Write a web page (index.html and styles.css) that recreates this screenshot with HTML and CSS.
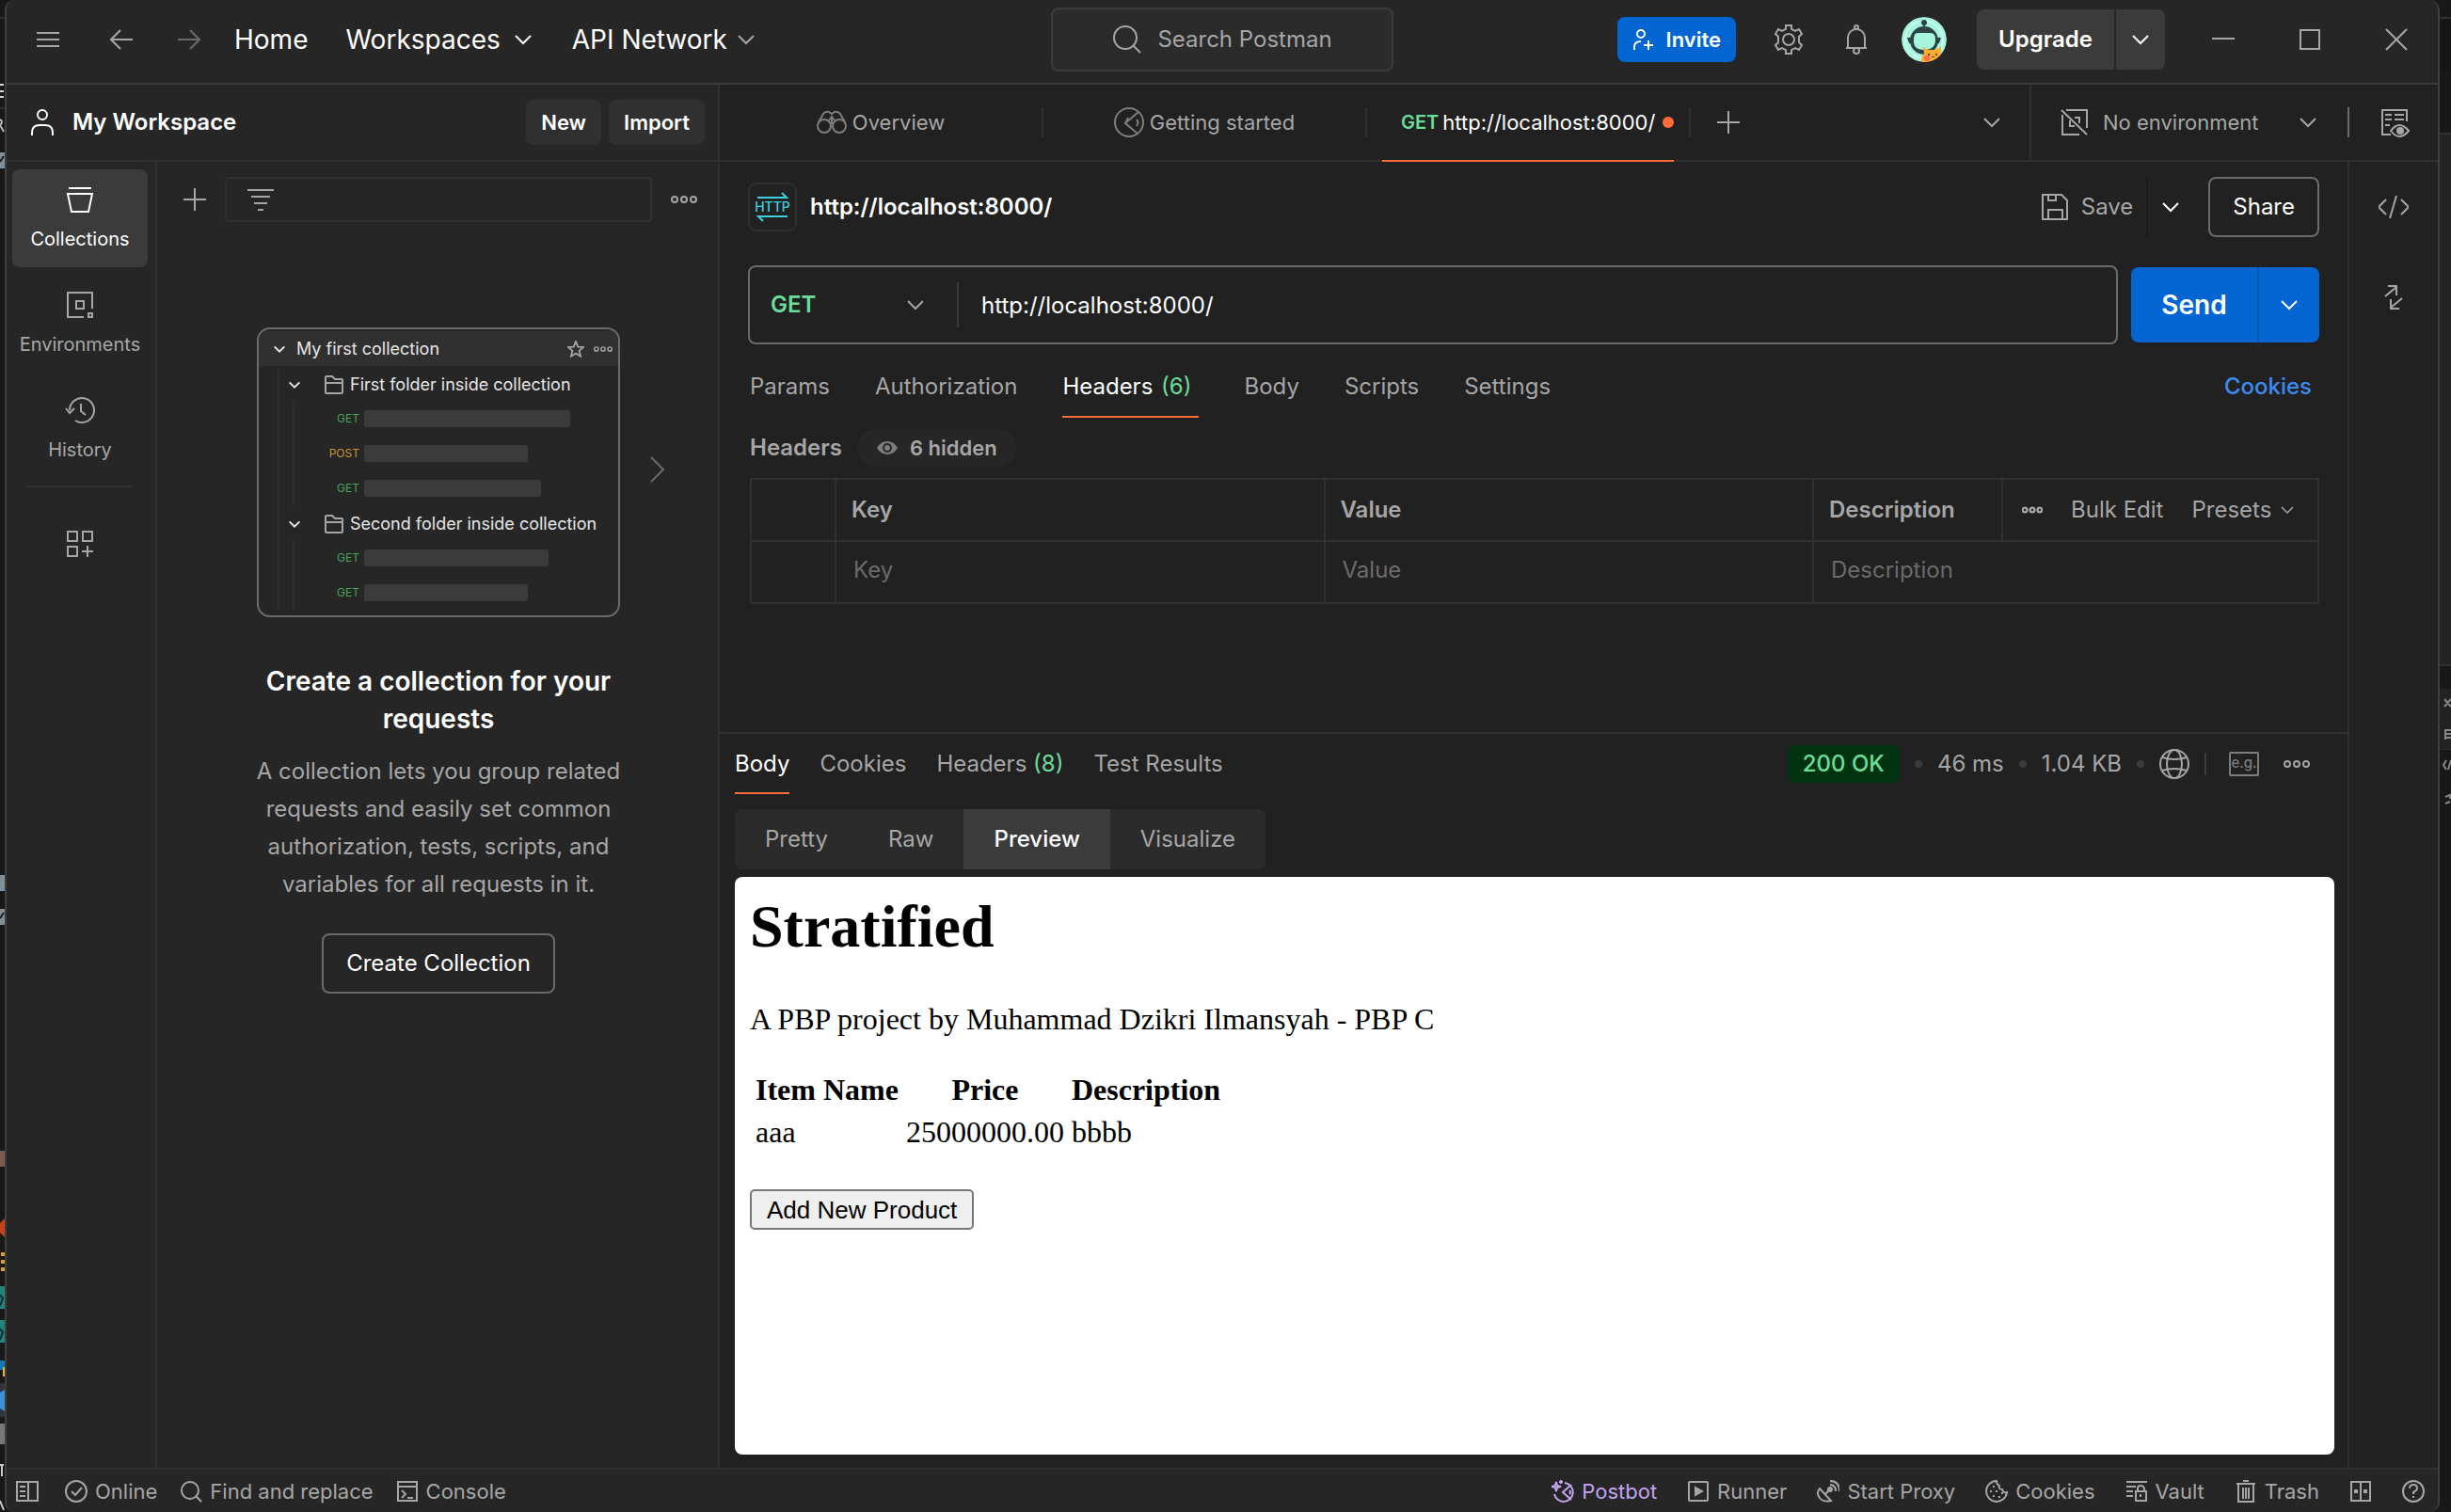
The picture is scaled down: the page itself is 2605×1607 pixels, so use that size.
FILE: index.html
```html
<!DOCTYPE html>
<html lang="en">
<head>
<meta charset="utf-8">
<title>My Workspace</title>
<link rel="stylesheet" href="styles.css">
</head>
<body>
<svg class="sprite" aria-hidden="true">
  <symbol id="chev" viewBox="0 0 24 24"><path d="M4 8l8 8 8-8"/></symbol>
  <symbol id="plus" viewBox="0 0 24 24"><path d="M12 0v24M0 12h24"/></symbol>
  <symbol id="dots" viewBox="0 0 28 28"><circle cx="4" cy="14" r="3"/><circle cx="14" cy="14" r="3"/><circle cx="24" cy="14" r="3"/></symbol>
  <symbol id="search" viewBox="0 0 32 32"><circle cx="14" cy="14" r="12"/><path d="M22 22l8 8"/></symbol>
  <symbol id="folder" viewBox="0 0 22 22"><path d="M2 19V3q0-1 1-1h6l3 3h7q1 0 1 1v13q0 1-1 1H3q-1 0-1-1zM2 9h18" /></symbol>
</svg>
<div class="desktop">
  <svg class="edge edge-left" width="5" height="1607" aria-hidden="true">
    <path d="M0 19h5M0 115h5" stroke="#2b2b2b"/>
    <path d="M0 90h4M0 97h4M0 103h4" stroke="#d8d8d8" stroke-width="2"/>
    <path d="M0 127q4 2 0 6l4 7" stroke="#b5b5b5" fill="none" stroke-width="2"/>
    <path d="M0 162h5v17H0zM0 930h5v17H0zM0 966h5v17H0z" fill="#7f909b"/>
    <path d="M0 172l4-6M0 976l4-6" stroke="#1b1b1b" stroke-width="2"/>
    <path d="M0 1223h5v17H0z" fill="#7a5a52"/><path d="M0 1300l5-5v20l-5-5z" fill="#c5431c"/>
    <path d="M1 1333h4M1 1341h4M1 1349h4" stroke="#d9a520" stroke-width="4"/>
    <path d="M0 1367h5v24H0zM0 1403h5v24H0z" fill="#1f877c"/><path d="M0 1376l3 4-3 8M0 1412l3 4-3 8" stroke="#123" fill="none"/>
    <path d="M0 1446h5v10H0z" fill="#1377b8"/><path d="M3 1453h2v10H3z" fill="#e0b63a"/>
    <path d="M0 1470h5v36H0z" fill="#33333d"/><path d="M0 1480l5-3v23l-5-3z" fill="#3e8fd8"/>
    <path d="M0 1513h5v22H0z" fill="#777"/><path d="M0 1557h4M2 1557v12M0 1595l4 10" stroke="#ccc" stroke-width="2"/>
  </svg>
  <div class="window">
    <header class="topbar">
      <div class="topbar-left">
        <button class="plain" aria-label="Menu"><svg class="i24" viewBox="0 0 24 24"><path d="M0 5h24M0 12h24M0 19h24"/></svg></button>
        <button class="plain back" aria-label="Back"><svg class="i24" viewBox="0 0 24 24"><path d="M24 12H1M11 2L1 12l10 10"/></svg></button>
        <button class="plain forward" aria-label="Forward"><svg class="i24" viewBox="0 0 24 24"><path d="M0 12h23M13 2l10 10-10 10"/></svg></button>
        <nav class="topnav">
          <a href="#">Home</a>
          <a href="#">Workspaces <svg class="i24"><use href="#chev"/></svg></a>
          <a href="#" class="network">API Network <svg class="i24 dim"><use href="#chev"/></svg></a>
        </nav>
      </div>
      <button class="search"><svg class="i32"><use href="#search"/></svg>Search Postman</button>
      <div class="topbar-right">
        <button class="invite"><svg class="i24" viewBox="0 0 24 24"><circle cx="9" cy="6" r="4"/><path d="M2 23v-3q0-6 7-6M17 13v10M12 18h10"/></svg>Invite</button>
        <button class="plain gear" aria-label="Settings"><svg class="i32" viewBox="0 0 32 32"><circle cx="16" cy="16" r="6"/><path d="M13 1h6v4l4 2 4-2 3 5-3 3v6l3 3-3 5-4-2-4 2v4h-6v-4l-4-2-4 2-3-5 3-3v-6l-3-3 3-5 4 2 4-2z"/></svg></button>
        <button class="plain bell" aria-label="Notifications"><svg class="i32" viewBox="0 0 32 32"><path d="M5 25h22M7 25V14a9 9 0 0 1 18 0v11"/><circle cx="16" cy="3" r="2"/><circle cx="16" cy="28" r="3"/></svg></button>
        <button class="plain avatar" aria-label="Account"><svg class="i48" viewBox="0 0 48 48">
          <defs><clipPath id="round"><circle cx="24" cy="24" r="24"/></clipPath></defs>
          <g clip-path="url(#round)" stroke="none"><circle cx="24" cy="24" r="24" fill="#a7f5dc"/><circle cx="24" cy="24" r="20" fill="none" stroke="#c9ffef"/>
          <circle cx="24" cy="25" r="15" fill="#2c4447"/><circle cx="24" cy="6" r="3" fill="#2c4447"/><path d="M23 6h2v6h-2zM6 22h5v6H8zM37 22h5l-2 6h-3z" fill="#2c4447"/>
          <path d="M17 17h14q5 0 5 7 0 11-12 11T13 24q0-7 4-7z" fill="#a7f5dc"/>
          <path d="M21 48q0-6 3-9l-1-7 6 3h7l6-4v8q0 9-9 9z" fill="#ffab2e"/><circle cx="27" cy="44" r="3" fill="#ff6c55"/><path d="M28 39h2v2h-2zM36 39h2v2h-2zM32 42h3v1h-3z" fill="#5b3a1a"/></g></svg></button>
        <div class="split upgrade"><button>Upgrade</button><button aria-label="More plans"><svg class="i24"><use href="#chev"/></svg></button></div>
        <div class="controls">
          <button class="plain" aria-label="Minimize"><svg class="i24" viewBox="0 0 24 24"><path d="M0 11h24"/></svg></button>
          <button class="plain" aria-label="Maximize"><svg class="i24" viewBox="0 0 24 24"><path d="M2 2h20v20H2z"/></svg></button>
          <button class="plain" aria-label="Close"><svg class="i24" viewBox="0 0 24 24"><path d="M1 1l22 22M23 1L1 23"/></svg></button>
        </div>
      </div>
    </header>

    <div class="workspace">
      <aside class="left">
        <div class="left-head">
          <svg class="i32" viewBox="0 0 32 32"><circle cx="16" cy="8" r="5"/><path d="M5 30v-3q0-8 8-8h6q8 0 8 8v3"/></svg>
          <h1>My Workspace</h1>
          <button class="soft">New</button><button class="soft">Import</button>
        </div>
        <div class="left-body">
          <nav class="sidebar">
            <a href="#" class="active"><svg class="i32" viewBox="0 0 32 32"><path d="M4 4h24M3 10h26l-4 19H7z"/></svg>Collections</a>
            <a href="#"><svg class="i32" viewBox="0 0 32 32"><path d="M29 20V3H3v26h17M12 12h8v8h-8zM25 25h4v4h-4z"/></svg>Environments</a>
            <a href="#"><svg class="i32" viewBox="0 0 32 32"><path d="M5 16A13 13 0 1 1 11 27M1 14l4 5 5-5M17 9v8l5 4"/></svg>History</a>
            <hr>
            <a href="#" class="more" aria-label="Configure sidebar"><svg class="i32" viewBox="0 0 32 32"><path d="M3 3h10v10H3zM19 3h10v10H19zM3 19h10v10H3zM24 18v12M18 24h12"/></svg></a>
          </nav>
          <section class="collections">
            <div class="tools">
              <button class="plain" aria-label="New collection"><svg class="i24"><use href="#plus"/></svg></button>
              <label class="filter"><svg class="i32" viewBox="0 0 32 32"><path d="M2 6h28M6 13h20M9 20h14M13 27h6"/></svg><input type="text" aria-label="Filter collections"></label>
              <button class="plain" aria-label="More"><svg class="i28"><use href="#dots"/></svg></button>
            </div>
            <div class="carousel">
              <div class="card">
                <div class="card-head"><svg class="i16"><use href="#chev"/></svg><span>My first collection</span>
                  <svg class="star" viewBox="0 0 20 20"><path d="M10 1l2.500 6.300 6.500.4-5 4.300 1.600 6.500-5.600-3.500-5.600 3.500L6 12 1 7.700l6.500-.4z"/></svg><svg class="i20"><use href="#dots"/></svg></div>
                <div class="tree">
                  <div class="folder"><svg class="i16"><use href="#chev"/></svg><svg class="i22"><use href="#folder"/></svg>First folder inside collection</div>
                  <ul>
                    <li><span>GET</span><i style="width:219px"></i></li>
                    <li><span class="post">POST</span><i style="width:174px"></i></li>
                    <li><span>GET</span><i style="width:188px"></i></li>
                  </ul>
                  <div class="folder"><svg class="i16"><use href="#chev"/></svg><svg class="i22"><use href="#folder"/></svg>Second folder inside collection</div>
                  <ul>
                    <li><span>GET</span><i style="width:196px"></i></li>
                    <li><span>GET</span><i style="width:174px"></i></li>
                  </ul>
                </div>
              </div>
              <button class="plain next" aria-label="Next"><svg class="i28" viewBox="0 0 28 28"><path d="M7 1l13 13L7 27"/></svg></button>
            </div>
            <h2>Create a collection for your requests</h2>
            <p>A collection lets you group related requests and easily set common authorization, tests, scripts, and variables for all requests in it.</p>
            <button class="outline">Create Collection</button>
          </section>
        </div>
      </aside>

      <main class="main">
        <div class="tabbar">
          <button class="tab"><svg class="i32" viewBox="0 0 32 32"><circle cx="8" cy="20" r="7"/><circle cx="24" cy="20" r="7"/><path d="M2 16L7 7q2-3 6-2l3 2 3-2q4-1 6 2l5 9M16 10v8M13 14l3-4 3 4"/></svg>Overview</button>
          <button class="tab"><svg class="i32" viewBox="0 0 32 32"><circle cx="16" cy="16" r="15"/><path d="M26 5L12 17l13 11M12 17l3-6M24 13q3 3 0 7"/></svg>Getting started</button>
          <button class="tab current"><b>GET</b><span>http://localhost:8000/</span><i></i></button>
          <button class="plain add" aria-label="New tab"><svg class="i24"><use href="#plus"/></svg></button>
          <button class="plain tabs-more" aria-label="All tabs"><svg class="i24"><use href="#chev"/></svg></button>
          <div class="env">
            <svg class="i32" viewBox="0 0 32 32"><path d="M7 3h22v19M3 8v21h18M2 3l27 26M11 14v6h5M16 11h5v6"/></svg>
            <select aria-label="Environment"><option>No environment</option></select>
            <svg class="i24"><use href="#chev"/></svg>
            <button class="plain quick" aria-label="Environment quick look"><svg class="i32" viewBox="0 0 32 32"><path d="M29 15V3H3v26h9M6 8h7M16 8h10M6 13h7M16 13h10M6 19h5"/><path d="M12 25q9-12 19 0-10 12-19 0z"/><circle cx="22" cy="25" r="3" fill="currentColor"/></svg></button>
          </div>
        </div>
        <div class="content">
          <div class="panes">
            <section class="request">
              <div class="title-row">
                <svg class="http" viewBox="0 0 52 52"><rect x="1" y="1" width="50" height="50" rx="8"/><g><path d="M10 16h31l-5-5M42 36H11l5 5"/></g><text x="26" y="31">HTTP</text></svg>
                <h2>http://localhost:8000/</h2>
                <button class="plain save"><svg class="i32" viewBox="0 0 32 32"><path d="M3 3h20l6 6v20H3zM9 3v6h8V3M9 29V19h15v10"/></svg>Save</button>
                <button class="plain save-more" aria-label="Save options"><svg class="i24"><use href="#chev"/></svg></button>
                <button class="outline">Share</button>
              </div>
              <div class="url-row">
                <div class="url">
                  <select aria-label="Method"><option>GET</option></select><svg class="i24"><use href="#chev"/></svg>
                  <input type="text" value="http://localhost:8000/" aria-label="Request URL">
                </div>
                <div class="split send"><button>Send</button><button aria-label="Send options"><svg class="i24"><use href="#chev"/></svg></button></div>
              </div>
              <div class="request-body">
                <div class="subtabs">
                  <button>Params</button><button>Authorization</button><button class="on counted">Headers <em>(6)</em></button><button>Body</button><button>Scripts</button><button>Settings</button>
                  <a href="#">Cookies</a>
                </div>
                <div class="hidden-row"><h3>Headers</h3><button class="pill"><svg class="i24" viewBox="0 0 24 24"><path d="M1 12q4-7 11-7t11 7q-4 7-11 7T1 12z" fill="currentColor" stroke="none"/><circle cx="12" cy="12" r="5" fill="#262626" stroke="none"/><circle cx="12" cy="12" r="2" fill="currentColor"/></svg>6 hidden</button></div>
                <table class="headers">
                  <colgroup><col class="c-check"><col><col><col class="c-desc"><col class="c-act"></colgroup>
                  <tr><th></th><th>Key</th><th>Value</th><th>Description</th><td><div class="acts"><button class="plain" aria-label="Columns"><svg class="i22"><use href="#dots"/></svg></button><button class="plain">Bulk Edit</button><button class="plain presets">Presets<svg class="i18"><use href="#chev"/></svg></button></div></td></tr>
                  <tr class="entry"><td></td><td><input type="text" placeholder="Key" aria-label="Key"></td><td><input type="text" placeholder="Value" aria-label="Value"></td><td colspan="2"><input type="text" placeholder="Description" aria-label="Description"></td></tr>
                </table>
              </div>
            </section>
            <section class="response">
              <div class="subtabs">
                <button class="on">Body</button><button>Cookies</button><button>Headers <em>(8)</em></button><button>Test Results</button>
                <div class="meta"><strong>200 OK</strong><i></i><span>46 ms</span><i></i><span>1.04 KB</span><i></i>
                  <svg class="i32" viewBox="0 0 32 32"><circle cx="16" cy="16" r="15"/><ellipse cx="16" cy="16" rx="8" ry="15"/><path d="M3 9q13 4 26 0M3 23q13-4 26 0"/></svg>
                  <span class="rule"></span>
                  <svg class="eg" viewBox="0 0 32 26"><rect x="1" y="1" width="30" height="24" rx="1"/><text x="16" y="17">e.g.</text></svg>
                  <svg class="i28"><use href="#dots"/></svg></div>
              </div>
              <div class="segments"><button>Pretty</button><button>Raw</button><button class="on">Preview</button><button>Visualize</button></div>
              <article class="preview">
                <h1>Stratified</h1>
                <p>A PBP project by Muhammad Dzikri Ilmansyah - PBP C</p>
                <table><tr><th>Item Name</th><th>Price</th><th>Description</th></tr><tr><td>aaa</td><td>25000000.00</td><td>bbbb</td></tr></table>
                <button>Add New Product</button>
              </article>
            </section>
          </div>
          <aside class="rail">
            <button class="plain" aria-label="Code"><svg class="i32" viewBox="0 0 32 32"><path d="M8 8l-8 8 8 8M24 8l8 8-8 8M19 4l-7 24"/></svg></button>
            <button class="plain" aria-label="Related"><svg class="i32" viewBox="0 0 32 32"><path d="M7 15L19 5M10 4h9v10M25 17L13 27M13 18v10h9"/></svg></button>
          </aside>
        </div>
      </main>
    </div>

    <footer class="status">
      <button class="first" aria-label="Toggle sidebar"><svg class="i24" viewBox="0 0 24 24"><path d="M1 2h22v20H1zM13 2v20M4 7h6M4 12h6M4 17h6"/></svg></button>
      <button><svg class="i24" viewBox="0 0 24 24"><circle cx="12" cy="12" r="11"/><path d="M7 12l4 4 7-8"/></svg>Online</button>
      <button><svg class="i24" viewBox="0 0 24 24"><circle cx="11" cy="11" r="9"/><path d="M17 17l6 6"/></svg>Find and replace</button>
      <button><svg class="i24" viewBox="0 0 24 24"><path d="M2 2h20v20H2zM2 7h20M6 11l4 4-4 4M12 19h6"/></svg>Console</button>
      <div class="status-right">
      <button class="postbot"><svg class="i24" viewBox="0 0 24 24"><path d="M5 2l1 4 4 1-4 1-1 4-1-4-4-1 4-1zM10 0v4M8 2h4M14 3a10 10 0 1 1-11 12M21 5l-9 8 9 8M19 11q2 2 0 4"/></svg>Postbot</button>
      <button><svg class="i24" viewBox="0 0 24 24"><rect x="2" y="2" width="20" height="20" rx="1"/><path d="M9 8l7 4-7 4z" fill="currentColor"/></svg>Runner</button>
      <button><svg class="i24" viewBox="0 0 24 24"><path d="M3 9q-4 5 0 10t12 3zM9 15l5-5M14 5q6 0 6 7M14 1q10 0 10 11"/><circle cx="14" cy="10" r="2" fill="currentColor"/></svg>Start Proxy</button>
      <button><svg class="i24" viewBox="0 0 24 24"><path d="M12 1a11 11 0 1 0 11 12q-4 1-5-3-4 0-3-4-3-1-3-5z"/><path d="M8 7h2M5 12h2M11 12h2M8 17h2M14 18h2M17 14h2"/></svg>Cookies</button>
      <button><svg class="i24" viewBox="0 0 24 24"><path d="M1 2h22M1 7h10M1 12h7M1 17h7M11 12h11v10H11zM13 12V9q0-3 3-3t4 3v3M16 15v3"/></svg>Vault</button>
      <button><svg class="i24" viewBox="0 0 24 24"><path d="M2 4h20M9 1h6M4 5v18h16V5M9 8v12M12 8v12M15 8v12"/></svg>Trash</button>
      <button aria-label="Two pane view"><svg class="i24" viewBox="0 0 24 24"><path d="M2 2h20v20H2zM12 2v20"/><path d="M5 10h4v4H5zM15 10h4v4h-4z" fill="currentColor" stroke="none"/></svg></button>
      <button aria-label="Help"><svg class="i24" viewBox="0 0 24 24"><circle cx="12" cy="12" r="11"/><path d="M8 9q0-4 4-4t4 4q0 2-4 4v2M12 17v2"/></svg></button>
      </div>
    </footer>
  </div>
  <svg class="edge edge-right" width="12" height="1607" aria-hidden="true">
    <path d="M0 19h12v58H0z" fill="#161616"/><path d="M0 142h12v565H0z" fill="#242424"/>
    <path d="M0 19h12M0 142h12M0 707h12M0 765h12M0 796h12" stroke="#303030"/><path d="M0 732h12v64H0z" fill="#222"/>
    <path d="M5 743l7 8M12 743l-7 8M5 776h7M5 780h7M5 784h7M6 775v11M7 808l-3 5 3 5M12 808l-3 10M6 847l5-2v4M11 852l-5 2" stroke="#888" fill="none"/>
  </svg>
</div>
</body>
</html>
```
FILE: styles.css
```css
* { box-sizing: border-box; }
body { margin: 0; background: #181818; color: #fff; font: 24px/32px Inter, "Liberation Sans", sans-serif; }
button, input, select { font: inherit; color: inherit; margin: 0; }
button { border: 0; padding: 0; background: none; white-space: nowrap; }
a { color: inherit; text-decoration: none; }
h1, h2, h3, p, ul { margin: 0; padding: 0; }
svg { display: block; flex: none; fill: none; stroke: currentColor; stroke-width: 2; }
.sprite { position: absolute; width: 0; height: 0; }
.i16 { width: 16px; height: 16px; stroke-width: 3; }
.i18 { width: 18px; height: 18px; }
.i20 { width: 20px; height: 20px; }
.i22 { width: 22px; height: 22px; }
.i24 { width: 24px; height: 24px; }
.i28 { width: 28px; height: 28px; }
.i32 { width: 32px; height: 32px; }
.i48 { width: 48px; height: 48px; }
.plain { display: flex; align-items: center; color: #a6a6a6; }
.desktop { display: flex; height: 100vh; overflow: hidden; }
.edge { height: 100%; stroke: none; }
.window { flex: 1; min-width: 0; display: flex; flex-direction: column; background: #262626; border: solid #3f3f3f; border-width: 0 2px; border-radius: 10px; }

.topbar { display: grid; grid-template-columns: 1fr auto 1fr; align-items: center; height: 90px; padding-bottom: 4px; border-bottom: 2px solid #3b3b3b; }
.topbar-left { display: flex; align-items: center; padding-left: 32px; }
.back { margin-left: 54px; }
.forward { margin-left: 48px; color: #6b6b6b; }
.topnav { display: flex; gap: 40px; margin-left: 36px; font-size: 28px; }
.topnav a { display: flex; align-items: center; gap: 12px; }
.topnav .network { gap: 8px; }
.dim { color: #a6a6a6; }
.search { display: flex; align-items: center; justify-content: center; gap: 16px; width: 364px; height: 68px; background: #2b2b2b; border: 2px solid #3b3b3b; border-radius: 8px; color: #a6a6a6; }
.topbar-right { display: flex; align-items: center; justify-content: flex-end; }
.invite { display: flex; align-items: center; gap: 12px; height: 48px; padding: 0 16px; border-radius: 8px; background: #0265d2; font-size: 22px; font-weight: 600; }
.gear { margin-left: 40px; }
.bell { margin-left: 40px; }
.avatar { margin-left: 32px; }
.split { display: flex; border-radius: 8px; overflow: hidden; font-weight: 600; }
.split button { display: flex; align-items: center; justify-content: center; }
.upgrade { width: 200px; height: 64px; margin-left: 32px; background: #3b3b3b; }
.upgrade button:first-child { flex: 1; border-right: 2px solid #262626; }
.upgrade button:last-child { width: 52px; }
.controls { display: flex; margin-left: 14px; }
.controls button { width: 92px; padding-left: 4px; justify-content: center; }

.workspace { flex: 1; min-height: 0; display: flex; }
.left { width: 758px; flex: none; display: flex; flex-direction: column; border-right: 2px solid #303030; }
.left-head { display: flex; align-items: center; gap: 8px; height: 82px; padding: 0 14px 0 22px; border-bottom: 2px solid #303030; }
.left-head h1 { flex: 1; margin-left: 8px; font-size: 24px; font-weight: 600; }
.soft { height: 48px; padding: 0 16px; border-radius: 8px; background: #303030; font-size: 22px; font-weight: 600; }
.left-body { flex: 1; display: flex; }
.sidebar { width: 160px; flex: none; display: flex; flex-direction: column; gap: 8px; padding: 8px 8px 8px 6px; border-right: 2px solid #303030; font-size: 20px; line-height: 32px; color: #a6a6a6; }
.sidebar a { display: flex; flex-direction: column; align-items: center; gap: 10px; height: 104px; padding-top: 16px; border-radius: 8px; }
.sidebar .active { background: #3b3b3b; color: #fff; }
.sidebar hr { width: 112px; height: 2px; margin: 0 auto; border: 0; background: #303030; }
.sidebar .more { padding-top: 36px; }
.collections { flex: 1; display: flex; flex-direction: column; align-items: center; padding-left: 2px; text-align: center; }
.tools { align-self: stretch; display: flex; align-items: center; gap: 20px; padding: 16px 22px 0 26px; }
.filter { flex: 1; min-width: 0; display: flex; align-items: center; height: 48px; padding-left: 20px; border: 2px solid #303030; border-radius: 4px; color: #a6a6a6; }
.filter input { flex: 1; min-width: 0; background: none; border: 0; outline: 0; }
.carousel { align-self: stretch; display: grid; grid-template-columns: 1fr auto 1fr; align-items: center; margin-top: 112px; }
.card { grid-column: 2; width: 386px; padding: 2px 0 6px; background: #262626; border: 2px solid #6b6b6b; border-radius: 14px; font-size: 18px; line-height: 24px; color: #e6e6e6; text-align: left; overflow: hidden; }
.next { margin: 0 0 6px 26px; color: #6b6b6b; }
.card-head { display: flex; align-items: center; gap: 10px; height: 37px; padding: 0 6px 0 14px; background: #303030; }
.card-head span { flex: 1; }
.star { width: 18px; height: 18px; color: #a6a6a6; }
.card-head .i20 { color: #a6a6a6; }
.tree { margin-left: 20px; border-left: 2px solid #2c2c2c; }
.folder { display: flex; align-items: center; height: 37px; padding: 2px 0 0 8px; }
.folder .i22 { margin: 0 6px 0 23px; color: #a6a6a6; }
.tree ul { list-style: none; margin-left: 14px; border-left: 2px solid #2c2c2c; }
.tree li { display: flex; align-items: center; gap: 5px; height: 37px; }
.tree li span { width: 69px; text-align: right; font-size: 12px; color: #4aa35c; }
.tree li .post { color: #c9952f; }
.tree li i { height: 18px; border-radius: 3px; background: #3b3b3b; }
.collections h2 { width: 400px; margin-top: 48px; font-size: 28px; line-height: 40px; font-weight: 600; }
.collections p { width: 400px; margin: 16px 0 32px; line-height: 40px; color: #a6a6a6; }
.outline { height: 64px; padding: 0 24px; border: 2px solid #6b6b6b; border-radius: 8px; }

.main { flex: 1; min-width: 0; display: flex; flex-direction: column; background: #212121; }
.tabbar { display: flex; align-items: center; height: 82px; flex: none; border-bottom: 2px solid #303030; font-size: 22px; color: #a6a6a6; }
.tab { position: relative; display: flex; align-items: center; justify-content: center; gap: 6px; width: 344px; height: 32px; border-right: 2px solid #303030; }
.tab .i32 { color: #7d7d7d; }
.current { color: #fff; gap: 4px; padding: 0 16px 0 36px; }
.current b { font-size: 20px; font-weight: 600; color: #6bdd9a; }
.current span { flex: 1; text-align: left; }
.current i { flex: none; width: 12px; height: 12px; border-radius: 50%; background: #ff6c37; }
.current::after { content: ""; position: absolute; left: 16px; right: 16px; bottom: -26px; height: 2px; background: #ff6c37; }
.add { margin-left: 28px; }
.tabs-more { margin-left: auto; margin-right: 28px; }
.env { display: flex; align-items: center; width: 434px; height: 80px; padding: 0 30px; border-left: 2px solid #303030; }
.env select { flex: 1; min-width: 0; margin-left: 14px; padding: 0; border: 0; background: none; appearance: none; outline: 0; }
.quick { margin-left: 30px; height: 32px; padding-left: 32px; border-left: 2px solid #6b6b6b; }
.content { flex: 1; min-height: 0; display: flex; }
.panes { flex: 1; min-width: 0; display: flex; flex-direction: column; }
.rail { width: 96px; flex: none; display: flex; flex-direction: column; align-items: center; gap: 64px; padding-top: 32px; border-left: 2px solid #303030; }

.request { padding: 16px 30px 136px; }
.title-row { display: flex; align-items: center; height: 64px; }
.title-row h2 { flex: 1; margin-left: 14px; font-size: 24px; font-weight: 600; }
.http { width: 52px; height: 52px; color: #303030; }
.http g { color: #3fd0e0; stroke: #3fd0e0; }
.http text { font: 500 14px Inter, sans-serif; text-anchor: middle; fill: #3fd0e0; stroke: none; }
.save { gap: 12px; height: 64px; padding-right: 14px; border-right: 2px solid #1a1a1a; }
.save-more { margin: 0 28px 0 12px; color: #fff; }
.url-row { display: flex; align-items: center; gap: 14px; margin-top: 30px; }
.url { flex: 1; min-width: 0; display: flex; align-items: center; height: 84px; border: 2px solid #6b6b6b; border-radius: 8px; }
.url select { width: 164px; padding-left: 22px; border: 0; background: none; appearance: none; outline: 0; font-weight: 600; color: #6bdd9a; }
.url svg { color: #a6a6a6; }
.url input { flex: 1; min-width: 0; height: 48px; margin-left: 32px; padding: 0 24px; border: 0; border-left: 2px solid #3b3b3b; background: none; outline: 0; }
.send { width: 200px; height: 80px; background: #0265d2; font-size: 28px; }
.send button:first-child { flex: 1; border-right: 2px solid #0254ae; }
.send button:last-child { width: 64px; }
.request-body { padding-left: 2px; }
.subtabs { display: flex; gap: 48px; height: 66px; color: #a6a6a6; }
.subtabs button { border: solid transparent; border-width: 2px 0; }
.subtabs .on { color: #fff; border-bottom-color: #ff6c37; }
.subtabs .counted { padding-right: 8px; }
.subtabs em { margin-left: 2px; font-style: normal; color: #6bdd9a; }
.subtabs a { margin: auto 8px auto auto; font-weight: 500; color: #3d8bf0; }
.request .subtabs { margin-top: 12px; }
.hidden-row { display: flex; align-items: center; gap: 16px; margin-top: 12px; color: #a6a6a6; }
.hidden-row h3 { font-size: 24px; font-weight: 600; }
.pill { display: flex; align-items: center; gap: 12px; height: 40px; padding: 0 20px; border-radius: 20px; background: #262626; font-weight: 600; font-size: 22px; }
.pill svg { color: #7d7d7d; }
.headers { width: 100%; margin-top: 12px; table-layout: fixed; border-collapse: collapse; color: #a6a6a6; }
.headers th, .headers td { height: 66px; padding: 0 16px; border: 2px solid #303030; text-align: left; font-size: 24px; }
.headers th { font-weight: 600; }
.headers .entry td { padding-bottom: 4px; }
.c-check { width: 90px; }
.c-desc { width: 201px; }
.c-act { width: 336px; }
.headers input { width: 100%; padding: 0 2px; border: 0; background: none; outline: 0; }
.headers ::placeholder { color: #6b6b6b; opacity: 1; }
.acts { display: flex; align-items: center; gap: 30px; padding-left: 4px; }
.acts .i22 { stroke-width: 3; }
.presets { gap: 8px; }

.response { flex: 1; min-height: 0; display: flex; flex-direction: column; align-items: flex-start; padding: 0 14px 14px 16px; border-top: 2px solid #303030; }
.response .subtabs { align-self: stretch; gap: 32px; height: 64px; flex: none; }
.response em { margin-left: 0; }
.meta { display: flex; align-items: center; gap: 16px; margin-left: auto; padding-right: 26px; }
.meta strong { height: 40px; padding: 4px 16px; border-radius: 8px; background: #00330f; font-weight: 500; color: #6bdd9a; }
.meta i { width: 8px; height: 8px; border-radius: 50%; background: #3b3b3b; }
.rule { width: 2px; height: 24px; background: #3b3b3b; }
.eg { width: 32px; height: 26px; margin: 0 10px 0 8px; color: #7d7d7d; }
.eg text { font: 500 15px Inter, sans-serif; text-anchor: middle; fill: #7d7d7d; stroke: none; }
.segments { display: flex; margin: 16px 0 8px; border-radius: 8px; background: #2b2b2b; overflow: hidden; color: #a6a6a6; flex: none; }
.segments button { height: 64px; padding: 0 32px; }
.segments .on { background: #3b3b3b; color: #fff; font-weight: 500; }
.preview { flex: 1; align-self: stretch; padding: 16px; border-radius: 8px; background: #fff; color: #000; font: 32px/37px "Liberation Serif", serif; }
.preview h1 { font-size: 64px; line-height: 74px; }
.preview p { margin: 43px 0 32px; }
.preview table { border-spacing: 4px; }
.preview th, .preview td { padding: 2px; }
.preview td { text-align: left; }
.preview button { height: 43px; margin-top: 36px; padding: 0 16px; border: 2px solid #767676; border-radius: 5px; background: #efefef; font: 26px/32px "Liberation Sans", sans-serif; color: #000; }

.status { display: flex; align-items: center; height: 47px; flex: none; gap: 24px; padding: 0 14px 0 10px; border-top: 2px solid #303030; font-size: 22px; color: #a6a6a6; }
.status button { display: flex; align-items: center; gap: 8px; }
.status .first { margin-right: 4px; }
.status-right { flex: 1; display: flex; justify-content: flex-end; gap: 32px; }
.status .postbot { color: #c4a3f0; }
```
